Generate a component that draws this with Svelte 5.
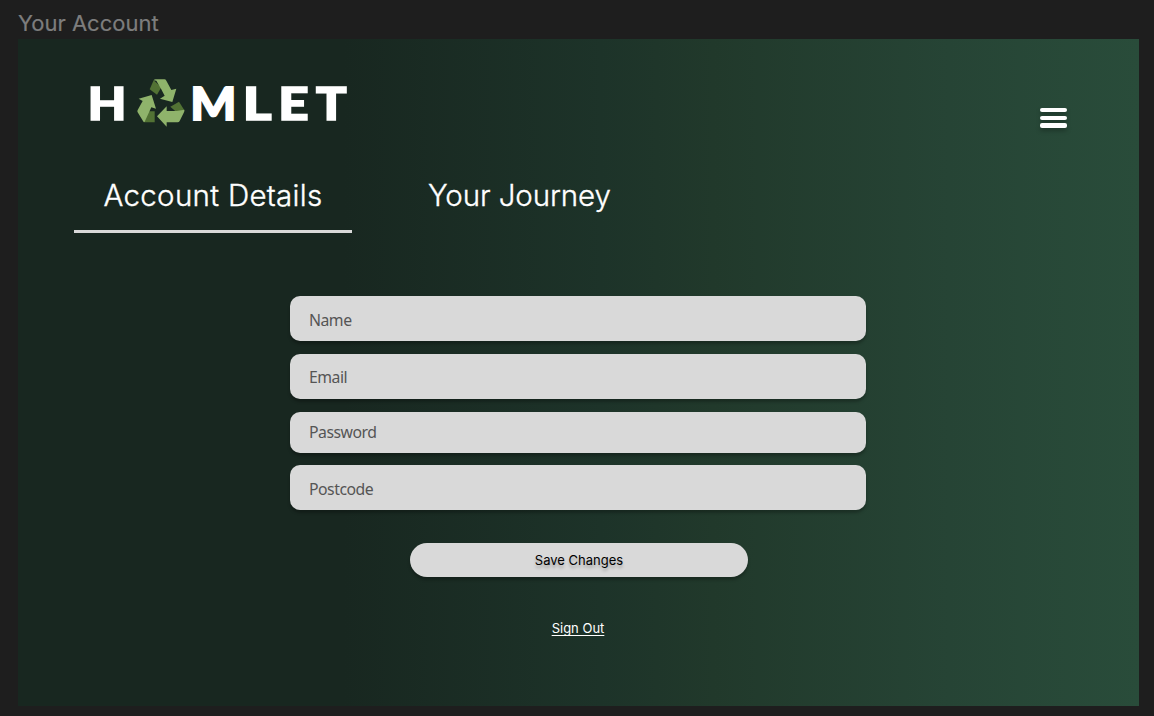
<script>
  const letters = [
    { c: 'H', x: 90, w: 34 },
    { c: 'M', x: 192.5, w: 41.5 },
    { c: 'L', x: 245.3, w: 26.7 },
    { c: 'E', x: 280.7, w: 28 },
    { c: 'T', x: 315, w: 32.3 },
  ];
  const fields = [
    { label: 'Name', h: 45, gap: 13, pad: 3 },
    { label: 'Email', h: 45, gap: 13, pad: 1 },
    { label: 'Password', h: 41, gap: 12, pad: 0 },
    { label: 'Postcode', h: 45, gap: 0, pad: 3 },
  ];
  let boxes = $state(letters.map(() => ({ s: 1, l: 0 })));

  // Stretch each wordmark letter so that its ink and outline fill its slot.
  $effect(() => {
    const ctx = document.createElement('canvas').getContext('2d');
    ctx.font = '900 46.5px Lato';
    boxes = letters.map(({ c, w }) => {
      const m = ctx.measureText(c);
      const ink = m.actualBoundingBoxRight + m.actualBoundingBoxLeft;
      return { s: (w - 1.8) / ink, l: m.actualBoundingBoxLeft };
    });
  });
</script>

<div class="canvas">
  <div class="title">Your Account</div>
  <main>
    <header>
      <svg class="logo" width="260" height="50" viewBox="89 78 260 50" role="img" aria-label="Hamlet">
        {#each letters as { c, x }, i}
          <text transform="translate({x + 0.9 + boxes[i].l * boxes[i].s} 119.7) scale({boxes[i].s} 1)">{c}</text>
        {/each}
        <g transform="translate(132 74) scale(.33333)">
          <g fill="#527234">
            <path d="M65 19 53 46 75 62 88 40Z" />
            <path d="M45 112H68V145H35Z" />
            <path d="M115 98 141 83 157 109 133 114Z" />
          </g>
          <g fill="#8fb36b">
            <path d="M65 19Q67 16 71 16H97Q101 16 103 20L118 48 133 44 121 84 84 74 98 65 87 44 73 20Z" />
            <path d="M20 74 59 63 72 104 58 100 38 143Q35 145 33 141L17 115Q15 112 17 108L32 81Z" />
            <path d="M75 127 104 97V111H134L157 107Q158 111 156 115L143 141Q141 145 137 145H104V158Z" />
          </g>
        </g>
      </svg>
      <button class="menu" aria-label="Menu"><i></i><i></i><i></i></button>
    </header>
    <nav>
      <a class="active" href="#account">Account Details</a>
      <a class="journey" href="#journey">Your Journey</a>
    </nav>
    <form>
      {#each fields as f}
        <div class="field" style="height:{f.h}px;margin-bottom:{f.gap}px;padding-top:{f.pad}px"><span class:up={f.label === 'Password'}>{f.label}</span></div>
      {/each}
      <button type="button" class="save">Save Changes</button>
      <a class="out" href="#out">Sign Out</a>
    </form>
  </main>
</div>

<style>
  :global(body) { background: #1e1e1e; }
  .canvas {
    box-sizing: border-box;
    height: 716px;
    padding: 0 15px 0 18px;
    overflow: hidden;
    font-family: Inter, sans-serif;
  }
  .title {
    height: 39px;
    line-height: 46px;
    font-size: 22px;
    color: #7d7d7d;
    -webkit-text-stroke: .2px #7d7d7d;
  }
  main {
    height: 667px;
    background: linear-gradient(90deg, #182720 0%, #182720 29%, #1d3329 52%, #21392b 62%, #264435 83%, #294c3a 100%);
    display: flex;
    flex-direction: column;
  }
  header {
    display: flex;
    justify-content: space-between;
    align-items: flex-start;
    padding: 39px 72px 0 71px;
    height: 90px;
  }
  .logo { display: block; overflow: visible; }
  .logo text {
    font: 900 46.5px Lato, sans-serif;
    fill: #fff;
    stroke: #fff;
    stroke-width: 1.8px;
    vector-effect: non-scaling-stroke;
  }
  button { border: 0; padding: 0; font-family: inherit; }
  .menu {
    margin-top: 30px;
    width: 27px;
    background: none;
    display: flex;
    flex-direction: column;
    gap: 3.5px;
    filter: drop-shadow(0 3px 2px rgba(0, 0, 0, .25));
  }
  .menu i { height: 4.2px; border-radius: 2px; background: #fff; }
  nav { display: flex; padding-left: 56px; }
  nav a {
    box-sizing: border-box;
    height: 65px;
    padding-top: 9px;
    line-height: 37px;
    font-size: 29.5px;
    font-weight: 300;
    -webkit-text-stroke: .35px #fff;
    color: #fff;
    text-decoration: none;
    text-align: center;
    white-space: nowrap;
  }
  .active { width: 278px; border-bottom: 3.5px solid #d9d9d9; letter-spacing: .3px; }
  .journey { margin-left: 76px; letter-spacing: -.1px; }
  form {
    width: 576px;
    margin: 63px 0 0 272px;
    display: flex;
    flex-direction: column;
    align-items: center;
  }
  .field {
    box-sizing: border-box;
    width: 100%;
    padding-left: 19px;
    display: flex;
    align-items: center;
    border-radius: 10px;
    background: #d9d9d9;
    box-shadow: 0 3px 3px rgba(0, 0, 0, .25);
    font: 15.8px "Noto Sans", sans-serif;
    letter-spacing: -.5px;
    color: #555;
  }
  .up { margin-bottom: 2px; }
  .save {
    width: 338px;
    height: 34px;
    margin: 33px 0 0 2px;
    border-radius: 17px;
    background: #d9d9d9;
    box-shadow: 0 3px 3px rgba(0, 0, 0, .25);
    color: #000;
    font-size: 13px;
    text-shadow: 0 3px 3px rgba(0, 0, 0, .25);
  }
  .out {
    margin-top: 43px;
    font-size: 13px;
    line-height: 16px;
    color: #fff;
    text-underline-offset: 2px;
    text-decoration-skip-ink: none;
  }
</style>
